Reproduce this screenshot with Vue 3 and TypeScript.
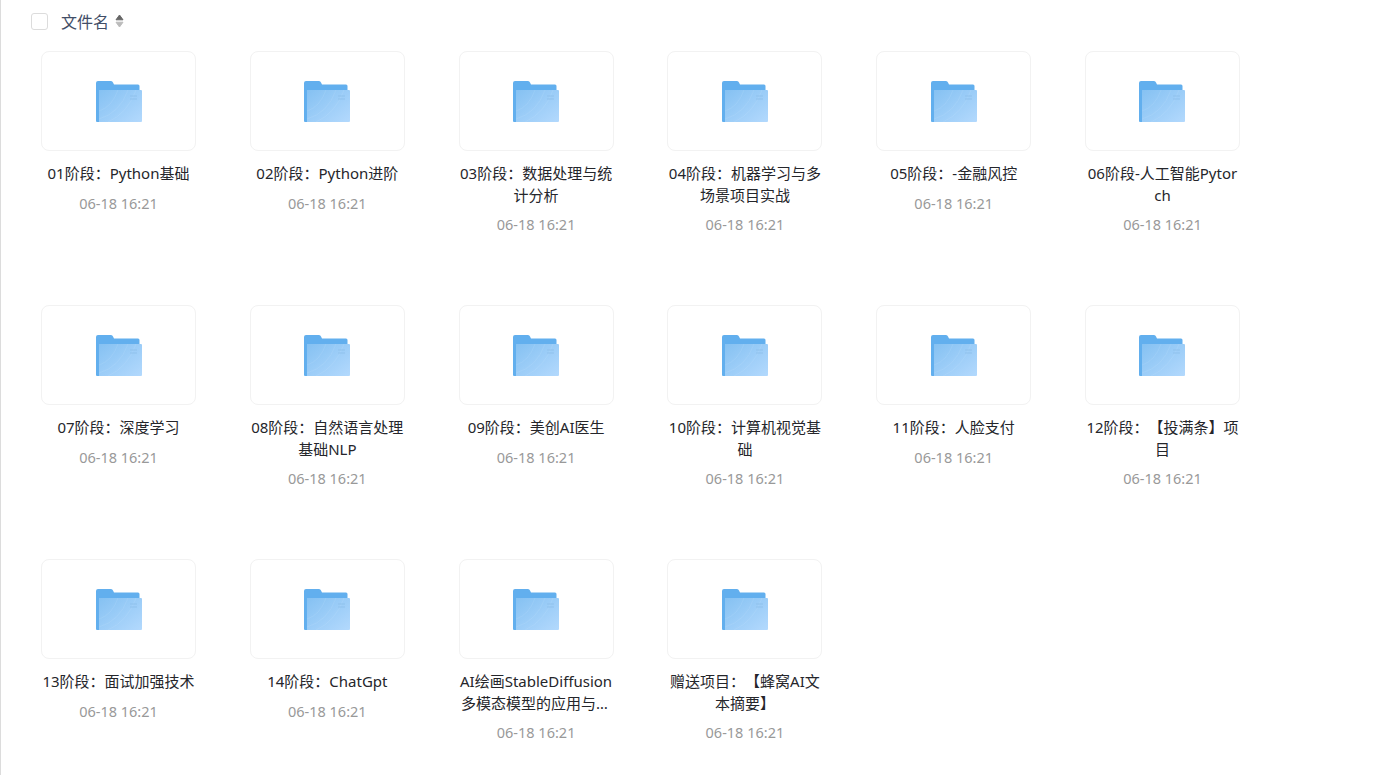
<script setup lang="ts">
interface FileItem {
  name: string
  time: string
}

const names = [
  '01阶段：Python基础',
  '02阶段：Python进阶',
  '03阶段：数据处理与统计分析',
  '04阶段：机器学习与多场景项目实战',
  '05阶段：-金融风控',
  '06阶段-人工智能Pytorch',
  '07阶段：深度学习',
  '08阶段：自然语言处理基础NLP',
  '09阶段：美创AI医生',
  '10阶段：计算机视觉基础',
  '11阶段：人脸支付',
  '12阶段：【投满条】项目',
  '13阶段：面试加强技术',
  '14阶段：ChatGpt',
  'AI绘画StableDiffusion多模态模型的应用与实战项目',
  '赠送项目：【蜂窝AI文本摘要】',
]

const files: FileItem[] = names.map((name) => ({ name, time: '06-18 16:21' }))
</script>

<template>
  <div class="page">
    <div class="list-head">
      <span class="checkbox"></span>
      <span class="head-label">文件名</span>
      <svg class="sort" width="9" height="14" viewBox="0 0 9 14">
        <path d="M4.5 1 L8 5.8 H1 Z" fill="#666" stroke="#666" stroke-linejoin="round" />
        <path d="M4.5 13 L8 8.2 H1 Z" fill="#bbb" stroke="#bbb" stroke-linejoin="round" />
      </svg>
    </div>

    <div class="file-grid">
      <div v-for="file in files" :key="file.name" class="file-item">
        <div class="thumb">
          <svg width="46" height="41" viewBox="0 0 46 41">
            <defs>
              <linearGradient id="sheet" x1="0" y1="0" x2="1" y2="1">
                <stop offset="0" stop-color="#85c1f2" />
                <stop offset="1" stop-color="#b3d9fd" />
              </linearGradient>
            </defs>
            <path d="M0 2 Q0 0 2 0 H15 Q16.5 0 17 1.5 L18 3.5 H42 Q43.5 3.5 43.5 5 V41 H1 Q0 41 0 40 Z" fill="#62afee" />
            <path d="M3 9 H45 Q46 9 46 10 V40 Q46 41 45 41 H3 Z" fill="url(#sheet)" />
            <path d="M3 30 Q16 26 22 9 M3 38 Q24 32 32 9 M12 41 Q32 32 40 9" fill="none" stroke="#fff" stroke-opacity="0.08" />
            <path d="M34 15 H41 M34 18 H41" stroke="#8fc1ec" stroke-width="1" />
          </svg>
        </div>
        <div class="file-name">{{ file.name }}</div>
        <div class="file-time">{{ file.time }}</div>
      </div>
    </div>
  </div>
</template>

<style>
html,
body {
  margin: 0;
  background: #fff;
}
</style>

<style scoped>
.page {
  box-sizing: border-box;
  height: 775px;
  overflow: hidden;
  border-left: 1px solid #dcdcdc;
  font-family: "Noto Sans", "Noto Sans CJK SC", sans-serif;
  text-spacing-trim: space-all;
}

.list-head {
  display: flex;
  align-items: center;
  height: 43px;
  padding-left: 30px;
  box-sizing: border-box;
  padding-bottom: 1px;
}

.checkbox {
  box-sizing: border-box;
  width: 17px;
  height: 17px;
  border: 1px solid #dcdcdc;
  border-radius: 3px;
}

.head-label {
  margin-left: 13px;
  font-size: 16px;
  color: #424e67;
}

.sort {
  margin-left: 6px;
}

.file-grid {
  display: grid;
  grid-template-columns: repeat(6, 208.8px);
  grid-auto-rows: 254px;
  padding: 8px 0 0 40px;
}

.file-item {
  width: 155px;
}

.thumb {
  box-sizing: border-box;
  display: flex;
  align-items: center;
  justify-content: center;
  height: 100px;
  border: 1px solid #f2f2f2;
  border-radius: 8px;
}

.thumb svg {
  margin-top: 1px;
}

.file-name {
  display: -webkit-box;
  -webkit-box-orient: vertical;
  -webkit-line-clamp: 2;
  overflow: hidden;
  margin-top: 12px;
  font-size: 15px;
  line-height: 21.5px;
  text-align: center;
  word-break: break-all;
  color: #25262b;
}

.file-time {
  margin-top: 7px;
  font-size: 14.5px;
  line-height: 22px;
  text-align: center;
  color: #999;
}
</style>
